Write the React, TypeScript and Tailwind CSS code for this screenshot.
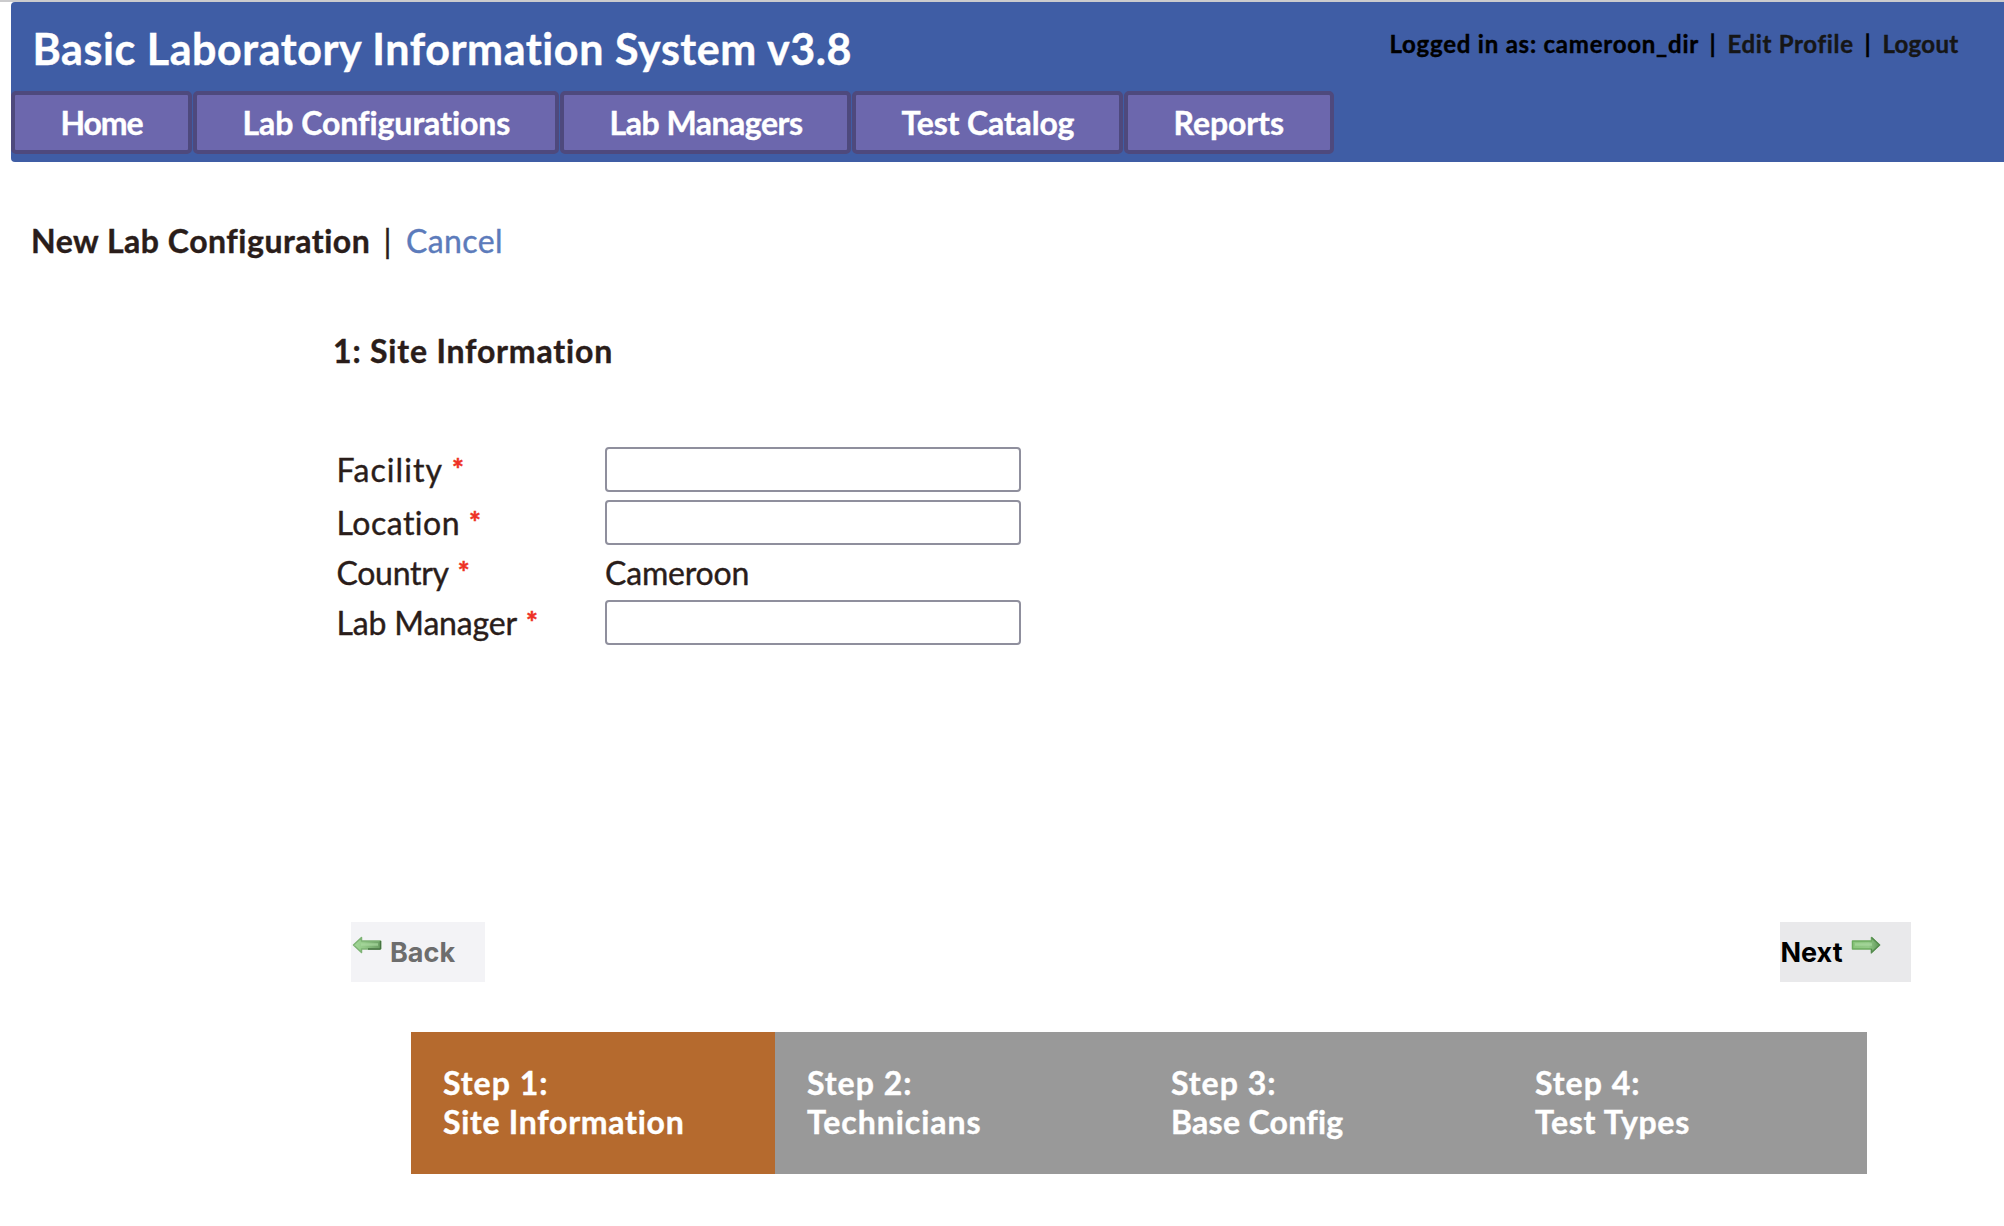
import { useState } from "react";

const navItems = [
  { label: "Home", box: "w-[181px]", text: "tracking-[-1.1px]" },
  { label: "Lab Configurations", box: "w-[366px]", text: "tracking-[-0.04px]" },
  { label: "Lab Managers", box: "w-[291px]", text: "tracking-[-0.48px]" },
  { label: "Test Catalog", box: "w-[271px]", text: "tracking-[-0.15px]" },
  { label: "Reports", box: "w-[210px]", text: "tracking-[-0.1px]" },
];

const fields = [
  { label: "Facility", text: "tracking-[1.09px]", row: "h-[53px]" },
  { label: "Location", text: "tracking-[0.5px]", row: "h-[53px]" },
  { label: "Country", text: "tracking-[-0.3px]", row: "h-[47px]", value: "Cameroon" },
  { label: "Lab Manager", text: "tracking-[-0.16px]", row: "h-[53px]" },
];

const steps = [
  { no: "Step 1:", name: "Site Information", text: "tracking-[0.72px]" },
  { no: "Step 2:", name: "Technicians", text: "tracking-[0.95px]" },
  { no: "Step 3:", name: "Base Config", text: "tracking-[0.28px]" },
  { no: "Step 4:", name: "Test Types", text: "tracking-[0.7px]" },
];

function Arrow({ left = false }: { left?: boolean }) {
  const id = left ? "arrow-left" : "arrow-right";
  return (
    <svg
      width="30"
      height="18"
      viewBox="0 0 30 18"
      className={left ? "shrink-0 -scale-x-100" : "shrink-0"}
    >
      <defs>
        <linearGradient id={id} x1="0" y1="0" x2="1" y2="0">
          <stop offset="0" stopColor={left ? "#6b9f64" : "#8ac67b"} />
          <stop offset="0.6" stopColor="#93c988" />
          <stop offset="1" stopColor={left ? "#a3d899" : "#5f9659"} />
        </linearGradient>
      </defs>
      <path
        d="M1.5 5H20.5V1.5L28.5 9L20.5 16.5V13H1.5Z"
        fill={`url(#${id})`}
        stroke={left ? "#7db374" : "#6cab5f"}
        strokeWidth="1.5"
        strokeLinejoin="round"
      />
      <path d="M4 8.5H21" stroke="#a9d89f" strokeWidth="2.5" opacity="0.7" />
      {left && <path d="M1.5 5V13M1.5 13H14" fill="none" stroke="#477341" strokeWidth="1.5" />}
      {!left && <path d="M20.5 13V16.5L28.5 9L20.5 1.5" fill="none" stroke="#568a50" strokeWidth="1.3" />}
    </svg>
  );
}

export default function App() {
  const [active, setActive] = useState(0);
  return (
    <div className="h-[1226px] w-full overflow-hidden bg-white font-[Lato,sans-serif] text-[32px] leading-[39px] text-[#2a1d1a] [-webkit-text-stroke:0.4px] [font-variant-ligatures:none]">
      <div className="h-[2px] bg-[#cbcbcd]" />
      <header className="ml-[11px] h-[160px] rounded-l-[4px] bg-[#3f5da5]">
        <div className="flex h-[89px] items-start justify-between">
          <h1 className="ml-[21.5px] mt-[21px] whitespace-nowrap text-[43px] font-bold leading-[52px] tracking-[0.58px] text-white">
            Basic Laboratory Information System v3.8
          </h1>
          <div className="mr-[45.5px] mt-[27px] flex whitespace-pre text-[24px] font-bold leading-[30px] text-black">
            <span className="w-[320px] tracking-[0.78px]">Logged in as: cameroon_dir</span>
            <span className="w-[18px]">|</span>
            <a className="w-[137px] tracking-[0.68px] text-[#161616]">Edit Profile</a>
            <span className="w-[18px]">|</span>
            <a className="tracking-[0.3px] text-[#161616]">Logout</a>
          </div>
        </div>
        <nav className="flex gap-px">
          {navItems.map((n) => (
            <a
              key={n.label}
              className={`flex h-[63px] items-center rounded-[5px] border-4 border-[#4e497d] bg-[#6c67ad] pl-[45.5px] font-bold whitespace-nowrap text-white ${n.box} ${n.text}`}
            >
              {n.label}
            </a>
          ))}
        </nav>
      </header>

      <main>
        <div className="ml-[31px] mt-[59px] flex whitespace-nowrap">
          <span className="w-[352.5px] font-bold tracking-[0.52px]">New Lab Configuration</span>
          <span className="w-[22.5px]">|</span>
          <a className="tracking-[0.4px] text-[#5c7bbb]">Cancel</a>
        </div>

        <section className="ml-[333px] mt-[71px]">
          <h2 className="font-bold tracking-[0.82px]">1: Site Information</h2>
          <form className="mt-[73px]">
            {fields.map((f) => (
              <div key={f.label} className={`flex items-center ${f.row}`}>
                <label className="flex w-[272px] pl-[3.5px] whitespace-nowrap">
                  <span className={f.text}>{f.label}</span>
                  <span className="ml-[9px] text-[28px] font-black leading-[36px] text-[#ee3124]">*</span>
                </label>
                {f.value ? (
                  <span className="tracking-[-0.18px]">{f.value}</span>
                ) : (
                  <input className="h-[45px] w-[416px] rounded-[4px] border-2 border-[#8f8f9d] bg-white px-2 outline-none" />
                )}
              </div>
            ))}
          </form>
        </section>

        <div className="ml-[351px] mt-[273px] flex w-[1560px] justify-between font-[Inter,sans-serif] text-[27px] font-bold leading-[34px] [-webkit-text-stroke:0px]">
          <button className="flex h-[60px] w-[134px] items-start bg-[#f3f3f6] pt-[14px] pl-px text-[#6d6d6d]">
            <Arrow left />
            <span className="ml-[8px]">Back</span>
          </button>
          <button className="flex h-[60px] w-[131px] items-start bg-[#e9e9eb] pt-[14px] text-black">
            <span className="ml-[0.5px] mr-[8px]">Next</span>
            <Arrow />
          </button>
        </div>

        <ol className="ml-[411px] mt-[50px] flex w-[1456px]">
          {steps.map((s, i) => (
            <li
              key={s.no}
              onClick={() => setActive(i)}
              className={`h-[142px] w-[364px] pl-[32px] pt-[31px] font-bold whitespace-nowrap text-white ${i === active ? "bg-[#b56a2e]" : "bg-[#999999]"}`}
            >
              <div className="tracking-[1px]">{s.no}</div>
              <div className={s.text}>{s.name}</div>
            </li>
          ))}
        </ol>
      </main>
    </div>
  );
}
